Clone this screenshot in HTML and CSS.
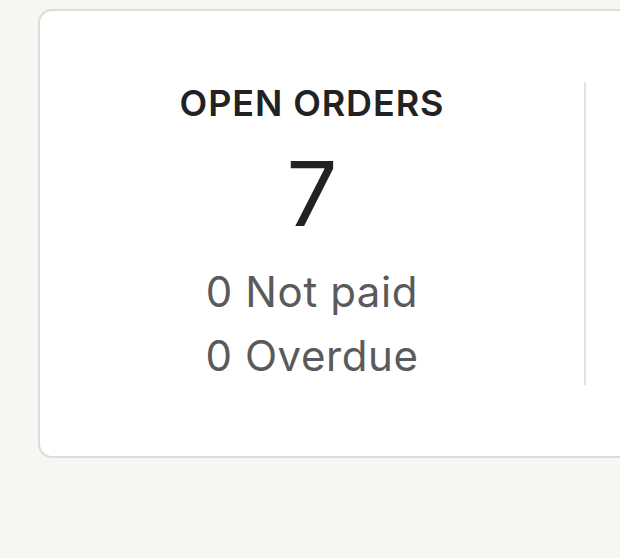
FILE: index.html
```html
<!DOCTYPE html>
<html lang="en">
  <head>
    <meta charset="UTF-8">
    <meta name="viewport" content="width=device-width, initial-scale=1.0">
    <title>Orders</title>
    <link rel="stylesheet" href="styles.css">
  </head>
  <body>
    <div class="summary-card">
      <div class="stat">
        <h2 class="stat-title">OPEN ORDERS</h2>
        <div class="stat-value">7</div>
        <div class="stat-notes">
          <div>0 Not paid</div>
          <div>0 Overdue</div>
        </div>
      </div>
      <div class="stat"></div>
    </div>
  </body>
</html>
```

FILE: styles.css
```css
html {
  overflow: hidden;
}
body {
  font-family: Inter, "Noto Sans", sans-serif;
  margin: 0;
  padding: 0;
  background-color: #f7f6f2;
  color: #222;
}
.summary-card {
  display: flex;
  width: 900px;
  height: 445px;
  margin: 9px 0 0 38px;
  background-color: #fff;
  border: 2px solid #dedcd8;
  border-radius: 14px;
}
.stat {
  flex-shrink: 0;
  width: 544px;
  margin: 71px 0;
  display: flex;
  flex-direction: column;
  align-items: center;
  border-right: 2px solid #e2e2e2;
}
.stat-title {
  margin: -1px 0 0;
  font-size: 36px;
  font-weight: 600;
  line-height: 44px;
  letter-spacing: 0.9px;
}
.stat-value {
  margin-top: 19px;
  font-size: 90px;
  font-weight: 400;
  line-height: 100px;
}
.stat-notes {
  margin-top: 16px;
  text-align: center;
  font-size: 42px;
  line-height: 64px;
  letter-spacing: 0.6px;
  color: #5a5a5a;
}
```
